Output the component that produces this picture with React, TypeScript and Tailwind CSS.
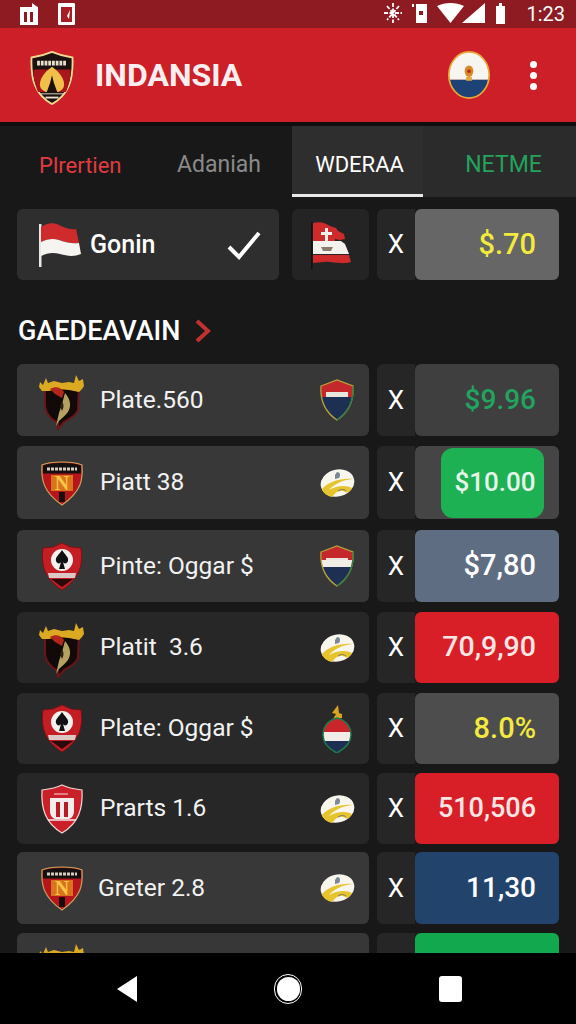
import React from 'react';

const CrownShield = () => (
  <svg width="46" height="60" viewBox="0 0 46 60">
    <path d="M6 16h34l-1 24c-2 6-9 9-14 12l-6 7 0-6C11 49 7 44 6 36z" fill="#120a08" stroke="#6e1418" strokeWidth="2" />
    <path d="M1 12l3 3 3-7 2 5 6-2 8 2 7-1 5 1 2-8 3 6 4-2 1 7-2 3-3 3-10-2-11-1-9 2-7 0-3-4z" fill="#dca923" />
    <path d="M11 19c5-3 11-2 14 3l-2 6-7-4z" fill="#b3261e" />
    <path d="M26 23c5 6 7 12 3 19-3 4-7 7-9 9l-3 5 3-13 3-9z" fill="#b5a160" />
    <path d="M23 31c2 3 2 7 0 10l-2-5z" fill="#2c2412" />
  </svg>
);

const NShield = () => (
  <svg width="44" height="48" viewBox="0 0 44 48">
    <path d="M2 6C10 2 34 2 42 6c1 14 0 26-20 40C3 33 1 20 2 6z" fill="#b5151b" stroke="#c9a25a" strokeWidth="1.200" />
    <path d="M3 6.500C10 3 34 3 41 6.500l0 8H3z" fill="#141010" />
    <path d="M7 10h30" stroke="#d8cfc0" strokeWidth="3" strokeDasharray="3 1" />
    <rect x="11" y="16" width="22" height="16" fill="#d9741c" />
    <text x="22" y="31" textAnchor="middle" fontFamily="Liberation Serif" fontWeight="700" fontSize="20" fill="#f6c648">N</text>
    <rect x="19" y="33" width="6" height="10" fill="#1a0c0c" />
  </svg>
);

const SpadeShield = () => (
  <svg width="40" height="49" viewBox="0 0 40 49">
    <path d="M1 6l10-1 9-4 9 4 10 1c2 15 0 30-19 42C1 36-1 21 1 6z" fill="#c41d23" stroke="#7a1216" strokeWidth="1" />
    <circle cx="20" cy="18" r="11" fill="#f4f1ee" />
    <path d="M20 8c3 5 7 7 6 11-1 3-4 3-5 1l2 7h-6l2-7c-1 2-4 2-5-1-1-4 3-6 6-11z" fill="#111" />
    <path d="M6 31h28l-1 5H7z" fill="#d9c8c4" />
    <path d="M9 37h22l-11 8z" fill="#2a0a0a" />
  </svg>
);

const RedShield = () => (
  <svg width="44" height="50" viewBox="0 0 44 50">
    <path d="M2 6c8-1 14-2 20-5 6 3 12 4 20 5 1 18-3 33-20 43C5 39 1 24 2 6z" fill="#c9202a" stroke="#f1d8d8" strokeWidth="1.200" />
    <path d="M14 10h14" stroke="#e8a0a0" strokeWidth="1.500" />
    <path d="M10 14h24v13c0 4-2 7-5 8H15c-3-1-5-4-5-8z" fill="#f5ecec" />
    <path d="M16 18h4v15h-4zM24 18h4v15h-4z" fill="#b81c25" />
    <path d="M8 36h28" stroke="#f5ecec" strokeWidth="1.500" />
  </svg>
);

const SmallShield = ({ variant }: { variant: 'sa' | 'sb' }) => (
  <svg width="34" height="42" viewBox="0 0 34 42">
    <clipPath id={variant}>
      <path d="M1 7l16-6 16 6c1 14-4 26-16 34C5 33 0 21 1 7z" />
    </clipPath>
    <g clipPath={`url(#${variant})`}>
      <rect width="34" height="18" fill="#c4282a" />
      <rect x="6" y="13" width="22" height="5" fill="#e8e4de" />
      <rect y={variant === 'sa' ? 18 : 20} width="34" height="24" fill="#1d2f52" />
      {variant === 'sb' && <rect y="15" width="34" height="7" fill="#f0ece6" />}
    </g>
    <path d="M1 7l16-6 16 6c1 14-4 26-16 34C5 33 0 21 1 7z" fill="none" stroke="#b8a23a" strokeWidth="1.300" />
    <path d="M33 7c1 14-4 26-16 34" fill="none" stroke="#2c7a45" strokeWidth="1.300" />
  </svg>
);

const Ball = () => (
  <svg width="35" height="30" viewBox="0 0 35 30">
    <ellipse cx="17.500" cy="15" rx="17" ry="13.500" transform="rotate(-14 17.500 15)" fill="#f7f5ec" />
    <path d="M2 21C8 14 20 10 33 11 22 12 14 16 9 22c8-5 18-5 23-2-1 2-3 4-5 5-5-4-10-3-15 4-5-1-9-4-10-8z" fill="#e5c42e" />
    <path d="M17 4c3 0 4 3 2 6l-4 1 0-4z" fill="#7c8796" />
    <path d="M18 23c3-2 6-2 8 0" fill="none" stroke="#77736a" strokeWidth="1" />
  </svg>
);

const Bulb = () => (
  <svg width="32" height="48" viewBox="0 0 32 48">
    <path d="M17 0l-6 8 4 1-3 5 9-1 0-4-3-1z" fill="#d9a520" />
    <clipPath id="bulb">
      <path d="M16 13c9 2 14 9 14 17 0 8-7 14-14 18C8 44 2 38 2 30c0-8 5-15 14-17z" />
    </clipPath>
    <g clipPath="url(#bulb)">
      <rect width="32" height="27" fill="#c9252a" />
      <rect y="27" width="32" height="9" fill="#f0ece6" />
      <rect y="36" width="32" height="12" fill="#1d2f52" />
    </g>
    <path d="M16 13c9 2 14 9 14 17 0 8-7 14-14 18C8 44 2 38 2 30c0-8 5-15 14-17z" fill="none" stroke="#1f7a4a" strokeWidth="1.500" />
  </svg>
);

const WhiteRedFlag = () => (
  <svg width="44" height="48" viewBox="0 0 44 48">
    <rect x="1" y="3" width="2.500" height="43" fill="#e8e8e8" />
    <path d="M3 6c6-4 12-5 18-2 6 3 12 5 17 4l3 14c-8 1-14-1-20-3-6-2-12-1-18 2z" fill="#cf2a2c" />
    <path d="M3 21c6-3 12-4 18-2 6 2 12 4 20 3l2 11c-7 3-14 2-21 0-7-2-13-1-19 2z" fill="#f6f4f1" />
  </svg>
);

const TornFlag = () => (
  <svg width="42" height="50" viewBox="0 0 42 50">
    <rect x="1" y="2" width="1.500" height="47" fill="#111" />
    <path d="M3 3c7-2 12 0 17 3l6 2 2 3 6 3 1 5-5 1-5-1 0 3H3z" fill="#cf2a2c" />
    <path d="M3 21h28l4 3 2 5 2 5H3z" fill="#f5f1ec" />
    <path d="M3 35h36l2 7c-10 3-20-1-27 0l-11 1z" fill="#cf2a2c" />
    <path d="M15 8h3v4h4v3h-4v8h-3v-8h-4v-3h4z" fill="#f5f1ec" />
    <path d="M11 27h12l-2 4h-8z" fill="#8a7a70" />
  </svg>
);

const HeaderLogo = () => (
  <svg width="48" height="54" viewBox="0 0 50 58" className="mt-[6px]">
    <path d="M3 7c8-1 15-3 22-6 7 3 14 5 22 6 1 24-4 40-22 50C7 47 2 31 3 7z" fill="#1a1110" stroke="#f0d890" strokeWidth="2" />
    <path d="M5 20h40c0 10-2 17-5 24H10C7 37 5 30 5 20z" fill="#a8161b" />
    <path d="M9 13h32" stroke="#e9e0cc" strokeWidth="5" strokeDasharray="3 1" />
    <path d="M25 17c4 3 13 10 13 19 0 6-6 9-13 9s-13-3-13-9c0-9 9-16 13-19z" fill="#f0c04a" />
    <path d="M25 26l2 8 4 11H19l4-11z" fill="#1a1110" />
    <path d="M13 46h24" stroke="#e9e0cc" strokeWidth="1" />
    <path d="M18 50h14" stroke="#e9e0cc" strokeWidth="2" />
  </svg>
);

const HeaderBadge = () => (
  <svg width="44" height="48" viewBox="0 0 44 50">
    <clipPath id="hb">
      <ellipse cx="22" cy="25" rx="21" ry="24" />
    </clipPath>
    <g clipPath="url(#hb)">
      <rect width="44" height="30" fill="#f7f5f0" />
      <rect y="30" width="44" height="20" fill="#1d4275" />
    </g>
    <ellipse cx="22" cy="25" rx="21" ry="24" fill="none" stroke="#e8a93a" strokeWidth="1.800" />
    <ellipse cx="22" cy="21" rx="4.500" ry="6" fill="#d98a28" />
    <circle cx="22" cy="21" r="2" fill="#b5301e" />
    <rect x="19" y="27" width="6" height="4" fill="#e0a83a" />
  </svg>
);

const StatusIcons = () => (
  <svg width="129" height="24" viewBox="0 0 129 24" fill="#fff">
    <path d="M9 1v20M0 11h18M3 4l12 14M15 4L3 18" stroke="#fff" strokeWidth="1.800" strokeDasharray="4 1.500" fill="none" />
    <path d="M28 2h2v3h-2zM32 2h11v19H32z" />
    <rect x="35" y="9" width="4" height="4" fill="#8f1a22" />
    <path d="M53 4c8-4 19-4 27 0L66.500 21z" />
    <path d="M78 21L101 1v20z" />
    <path d="M112 4h3V1h3v3h3v18h-9z" />
  </svg>
);

interface RowData {
  name: string;
  left: React.ReactNode;
  right: React.ReactNode;
  amount: string;
  height: string;
  margin: string;
  cardBg: string;
  amountBg: string;
  amountText: string;
  nameMargin?: string;
  boxed?: boolean;
}

const rows: RowData[] = [
  { name: 'Plate.560', left: <CrownShield />, right: <SmallShield variant="sa" />, amount: '$9.96', height: 'h-[72px]', margin: 'mb-[10px]', cardBg: 'bg-[#373737]', amountBg: 'bg-[#3f3f3f]', amountText: 'text-[28px] text-[#22a35f]' },
  { name: 'Piatt 38', left: <NShield />, right: <Ball />, amount: '$10.00', height: 'h-[73px]', margin: 'mb-[11px]', cardBg: 'bg-[#383838]', amountBg: 'bg-[#454545]', amountText: 'text-[26px] text-[#e6f5ea]', boxed: true },
  { name: 'Pinte: Oggar $', left: <SpadeShield />, right: <SmallShield variant="sb" />, amount: '$7,80', height: 'h-[72px]', margin: 'mb-[10px]', cardBg: 'bg-[#373737]', amountBg: 'bg-[#5f6d82]', amountText: 'text-[29px] text-white' },
  { name: 'Platit \u00a03.6', left: <CrownShield />, right: <Ball />, amount: '70,9,90', height: 'h-[71px]', margin: 'mb-[10px]', cardBg: 'bg-[#272727]', amountBg: 'bg-[#d81f28]', amountText: 'text-[28.500px] text-[#fbe6e6]' },
  { name: 'Plate: Oggar $', left: <SpadeShield />, right: <Bulb />, amount: '8.0%', height: 'h-[71px]', margin: 'mb-[9px]', cardBg: 'bg-[#292929]', amountBg: 'bg-[#4d4d4d]', amountText: 'text-[29px] text-[#f2ea3c]' },
  { name: 'Prarts 1.6', left: <RedShield />, right: <Ball />, amount: '510,506', height: 'h-[71px]', margin: 'mb-[8px]', cardBg: 'bg-[#272727]', amountBg: 'bg-[#d81f28]', amountText: 'text-[27px] text-[#fbe6e6]' },
  { name: 'Greter 2.8', left: <NShield />, right: <Ball />, amount: '11,30', height: 'h-[72px]', margin: 'mb-[9px]', cardBg: 'bg-[#383838]', amountBg: 'bg-[#22446c]', amountText: 'text-[28px] text-white', nameMargin: 'ml-[13px]' },
  { name: '', left: <CrownShield />, right: <Ball />, amount: '', height: 'h-[72px]', margin: 'mb-0', cardBg: 'bg-[#373737]', amountBg: 'bg-[#12a84e]', amountText: 'text-white' },
];

const MatchRow = ({ row }: { row: RowData }) => (
  <div className={`flex shrink-0 items-stretch ${row.height} ${row.margin}`}>
    <div className={`flex w-[352px] items-center rounded-md pl-[22px] pr-[14px] ${row.cardBg}`}>
      <div className="flex w-[46px] justify-center">{row.left}</div>
      <span className={`flex-1 text-[24.5px] text-[#f2f2f2] ${row.nameMargin ?? 'ml-[15px]'}`}>{row.name}</span>
      <div className="flex w-[36px] justify-center">{row.right}</div>
    </div>
    <div className="ml-[8px] flex w-[38px] items-center justify-center rounded-l-md bg-[#262626] text-[26px] text-white">{row.amount && 'X'}</div>
    <div className={`flex w-[144px] items-center justify-end rounded-md pr-[23px] font-medium ${row.amountBg} ${row.amountText}`}>
      {row.boxed ? (
        <div className="-mr-[8px] flex h-[70px] w-[103px] items-center justify-center rounded-xl bg-[#1db154] pl-[5px]">{row.amount}</div>
      ) : (
        row.amount
      )}
    </div>
  </div>
);

const App: React.FC = () => {
  return (
    <div className="flex h-[1024px] w-[576px] flex-col overflow-hidden bg-[#181818] font-[Roboto,sans-serif]">
      {/* status bar */}
      <div className="flex h-[28px] shrink-0 items-center justify-between bg-[#8e1a22] pl-[20px] pr-[11px]">
        <div className="flex items-center gap-[20px]">
          <svg width="18" height="22" viewBox="0 0 18 22" fill="#fff">
            <path d="M0 4h12V0l4 3 2 1v18H0z" />
            <path d="M4 9h3v10H4zM10 9h3v10h-3z" fill="#8e1a22" />
          </svg>
          <svg width="17" height="22" viewBox="0 0 17 22" fill="#fff">
            <rect width="17" height="22" rx="1" />
            <path d="M3 4h11v15H3z" fill="#a51d25" />
            <path d="M6 8l3 5 3-6-1 9-2-3z" fill="#fff" />
          </svg>
        </div>
        <div className="flex items-center gap-[13px]">
          <StatusIcons />
          <span className="text-[20px] leading-none text-white">1:23</span>
        </div>
      </div>

      {/* app bar */}
      <div className="flex h-[94px] shrink-0 items-center bg-[#cc1f27] pl-[28px] pr-[39px]">
        <HeaderLogo />
        <span className="ml-[19px] flex-1 text-[32px] font-bold text-[#f9eef0]">INDANSIA</span>
        <HeaderBadge />
        <div className="ml-[39px] flex flex-col gap-[4px]">
          <span className="h-[7px] w-[7px] rounded-full bg-white" />
          <span className="h-[7px] w-[7px] rounded-full bg-white" />
          <span className="h-[7px] w-[7px] rounded-full bg-white" />
        </div>
      </div>

      {/* tabs */}
      <div className="flex h-[75px] shrink-0 border-t-[4px] border-[#0e0e0e] text-[23px]">
        <div className="flex w-[292px] pt-[8px]">
          <div className="flex w-[158px] items-center pl-[39px] text-[22px] text-[#e03c40]">Plrertien</div>
          <div className="flex flex-1 items-center pl-[19px] text-[#8a8a8a]">Adaniah</div>
        </div>
        <div className="flex w-[131px] items-center justify-center border-b-[3px] border-[#e8e8e8] bg-[#2e2e2e] pl-[4px] pt-[8px] text-[22px] text-white">WDERAA</div>
        <div className="flex flex-1 items-center justify-center bg-[#2b2b2b] pl-[8px] pt-[8px] text-[#23a35c]">NETME</div>
      </div>

      {/* selected bet */}
      <div className="mx-[17px] mt-[12px] flex h-[71px] shrink-0">
        <div className="flex w-[262px] items-center rounded-md bg-[#2e2e2e] pl-[21px] pr-[18px]">
          <WhiteRedFlag />
          <span className="ml-[8px] flex-1 text-[25px] font-medium text-white">Gonin</span>
          <svg width="34" height="30" viewBox="0 0 34 30" fill="none">
            <path d="M2 17l10 10L32 3" stroke="#fff" strokeWidth="4" />
          </svg>
        </div>
        <div className="ml-[13px] flex w-[77px] items-center justify-center rounded-md bg-[#242424]">
          <TornFlag />
        </div>
        <div className="ml-[8px] flex w-[38px] items-center justify-center rounded-l-md bg-[#262626] text-[26px] text-white">X</div>
        <div className="flex w-[144px] items-center justify-end rounded-md bg-[#666666] pr-[23px] text-[29px] font-medium text-[#f2ea3c]">$.70</div>
      </div>

      {/* section title */}
      <div className="ml-[18px] mt-[33px] flex h-[36px] shrink-0 items-center">
        <span className="text-[27px] font-medium text-white">GAEDEAVAIN</span>
        <svg className="ml-[14px]" width="18" height="24" viewBox="0 0 18 24" fill="none">
          <path d="M3 2l11 10L3 22" stroke="#c0322f" strokeWidth="4" />
        </svg>
      </div>

      {/* list */}
      <div className="ml-[17px] mt-[15px] min-h-0 flex-1 overflow-hidden">
        {rows.map((row, i) => (
          <MatchRow key={i} row={row} />
        ))}
      </div>

      {/* nav bar */}
      <div className="flex h-[71px] shrink-0 items-center bg-black pl-[116px] pr-[114px]">
        <svg width="22" height="28" viewBox="0 0 22 28" fill="#fff">
          <path d="M21 1v26L1 14z" />
        </svg>
        <div className="ml-[136px] flex h-[30px] w-[28px] items-center justify-center rounded-full border border-white">
          <span className="h-[24px] w-[23px] rounded-full bg-white" />
        </div>
        <div className="ml-auto h-[26px] w-[23px] rounded-[3px] bg-white" />
      </div>
    </div>
  );
};

export default App;
